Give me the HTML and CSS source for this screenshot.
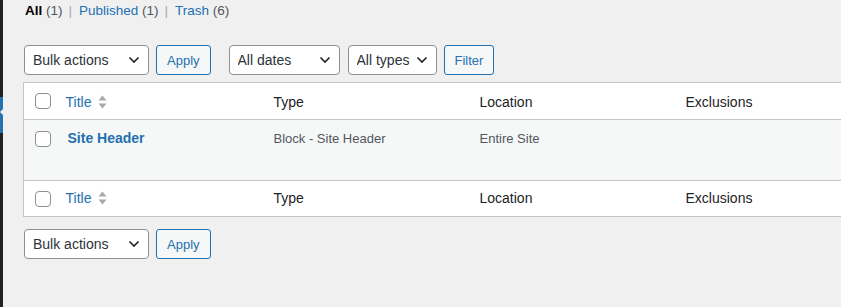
FILE: index.html
```html
<!DOCTYPE html>
<html lang="en">
<head>
  <meta charset="UTF-8" />
  <title>Elements</title>
  <link rel="stylesheet" href="styles.css">
</head>
<body>

  <div class="admin-menu">
    <div class="menu-top"></div>
    <div class="menu-current"></div>
    <div class="menu-rest"></div>
  </div>

  <div class="wrap">
    <ul class="subsubsub">
      <li><a class="current">All <span class="count">(1)</span></a><span class="sep">|</span></li>
      <li><a href="#">Published <span class="count">(1)</span></a><span class="sep">|</span></li>
      <li><a href="#">Trash <span class="count">(6)</span></a></li>
    </ul>

    <div class="tablenav">
      <select class="bulk"><option>Bulk actions</option></select>
      <button class="btn">Apply</button>
      <select class="dates"><option>All dates</option></select>
      <select class="types"><option>All types</option></select>
      <button class="btn">Filter</button>
    </div>

    <table class="list-table">
      <colgroup>
        <col class="c-cb">
        <col class="c-title">
        <col class="c-col">
        <col class="c-col">
        <col>
      </colgroup>
      <thead>
        <tr>
          <td class="cb"><span class="checkbox"></span></td>
          <th class="sortable"><a href="#">Title</a>
            <svg class="sort" width="9" height="14" viewBox="0 0 9 14"><path d="M4.5 0.5 L8.5 5.5 H0.5 Z" /><path d="M4.5 13.5 L8.5 8.5 H0.5 Z" /></svg>
          </th>
          <th>Type</th>
          <th>Location</th>
          <th>Exclusions</th>
        </tr>
      </thead>
      <tbody>
        <tr>
          <td class="cb"><span class="checkbox"></span></td>
          <td class="title"><a href="#">Site Header</a></td>
          <td class="meta">Block - Site Header</td>
          <td class="meta">Entire Site</td>
          <td class="meta"></td>
        </tr>
      </tbody>
      <tfoot>
        <tr>
          <td class="cb"><span class="checkbox"></span></td>
          <th class="sortable"><a href="#">Title</a>
            <svg class="sort" width="9" height="14" viewBox="0 0 9 14"><path d="M4.5 0.5 L8.5 5.5 H0.5 Z" /><path d="M4.5 13.5 L8.5 8.5 H0.5 Z" /></svg>
          </th>
          <th>Type</th>
          <th>Location</th>
          <th>Exclusions</th>
        </tr>
      </tfoot>
    </table>

    <div class="tablenav bottom">
      <select class="bulk"><option>Bulk actions</option></select>
      <button class="btn">Apply</button>
    </div>
  </div>

</body>
</html>
```

FILE: styles.css
```css
body {
  margin: 0;
  background: #f0f0f1;
  color: #1d2327;
  font-family: "Liberation Sans", Arial, sans-serif;
  font-size: 13px;
  display: flex;
  height: 307px;
  overflow: hidden;
}
.admin-menu {
  width: 3px;
  flex: none;
  display: flex;
  flex-direction: column;
}
.menu-top {
  background: #1d2327;
  height: 97px;
}
.menu-current {
  background: #2271b1;
  height: 36px;
  position: relative;
}
.menu-current::after {
  content: "";
  position: absolute;
  right: 0;
  top: 12px;
  border: 3px solid transparent;
  border-right-color: #f0f0f1;
}
.menu-rest {
  background: #1d2327;
  flex: 1;
}
.wrap {
  padding-left: 20px;
  width: 900px;
  flex: none;
}
.subsubsub {
  list-style: none;
  margin: 2px 0 0 2px;
  padding: 0;
  display: flex;
  color: #a7aaad;
  line-height: 17px;
  font-size: 13.5px;
}
.subsubsub .sep {
  margin: 0 7px 0 6px;
}
.subsubsub a {
  color: #2271b1;
  text-decoration: none;
}
.subsubsub a.current {
  color: #000;
  font-weight: bold;
}
.subsubsub .count {
  color: #50575e;
  font-weight: normal;
}
.tablenav {
  display: flex;
  align-items: center;
  margin-top: 26px;
  margin-left: 1px;
  height: 30px;
}
.tablenav.bottom {
  margin-top: 12px;
}
select {
  appearance: none;
  -webkit-appearance: none;
  height: 30px;
  font-family: inherit;
  font-size: 14px;
  color: #2c3338;
  border: 1px solid #8c8f94;
  border-radius: 4px;
  background: #fff url("data:image/svg+xml;charset=utf-8,%3Csvg xmlns='http://www.w3.org/2000/svg' width='12' height='8' viewBox='0 0 12 8'%3E%3Cpath d='M1.5 1.5 L6 6 L10.5 1.5' fill='none' stroke='%231d2327' stroke-width='1.6'/%3E%3C/svg%3E") no-repeat right 8px center;
  padding: 0 24px 0 8px;
  margin-right: 7px;
}
select.bulk {
  width: 125px;
}
select.dates {
  width: 111px;
  margin-left: 11px;
  margin-right: 8px;
}
select.types {
  width: 89px;
}
.btn {
  height: 30px;
  font-family: inherit;
  font-size: 13px;
  color: #2271b1;
  background: #f6f7f7;
  border: 1px solid #2271b1;
  border-radius: 3px;
  padding: 0 10px;
  margin-right: 7px;
  cursor: pointer;
}
.list-table {
  margin-top: 7px;
  width: 880px;
  border-collapse: collapse;
  table-layout: fixed;
  background: #fff;
  border: 1px solid #c3c4c7;
}
.c-cb {
  width: 34px;
}
.c-title {
  width: 208px;
}
.c-col {
  width: 206px;
}
.list-table th,
.list-table td {
  text-align: left;
  font-weight: normal;
  font-size: 14px;
  padding: 8px;
  line-height: 19px;
  vertical-align: top;
}
.list-table thead tr {
  height: 37px;
  border-bottom: 1px solid #c3c4c7;
}
.list-table tfoot tr {
  height: 36px;
  border-top: 1px solid #c3c4c7;
}
.list-table thead th,
.list-table tfoot th,
.list-table thead td,
.list-table tfoot td {
  vertical-align: middle;
}
.list-table thead th,
.list-table thead td {
  padding-top: 9px;
  padding-bottom: 7px;
}
.list-table tbody tr {
  background: #f6f7f7;
  height: 61px;
}
.list-table tbody td {
  padding-top: 9px;
}
.list-table td.cb {
  padding: 0 0 0 11px;
}
.list-table tbody td.cb {
  padding-top: 11px;
}
.checkbox {
  display: block;
  width: 14px;
  height: 14px;
  border: 1px solid #8c8f94;
  border-radius: 4px;
  background: #fff;
}
.sortable a {
  color: #2271b1;
  text-decoration: none;
}
.sort {
  fill: #a7aaad;
  vertical-align: -2px;
  margin-left: 3px;
}
.list-table td.title {
  padding-left: 10px;
}
.title a {
  color: #2271b1;
  font-weight: bold;
  text-decoration: none;
}
.list-table td.meta {
  font-size: 13px;
  color: #50575e;
}
```
